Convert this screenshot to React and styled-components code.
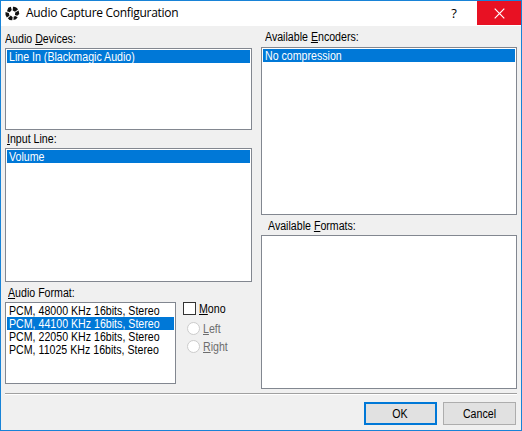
import React from "react";
import styled, { createGlobalStyle } from "styled-components";

const GlobalStyle = createGlobalStyle`
  * { box-sizing: border-box; }
  body { margin: 0; background: #f0f0f0; }
`;

const Window = styled.div`
  width: 522px;
  height: 431px;
  border: 1px solid #1883d7;
  background: #f0f0f0;
  color: #000;
  font: 12.5px/15px "Liberation Sans", Arial, sans-serif;
  white-space: nowrap;
  overflow: hidden;
  cursor: default;
`;

const TitleBar = styled.header`
  display: flex;
  height: 25px;
  padding-left: 4px;
  background: #fff;
`;

const AppIcon = styled.svg`
  width: 15px;
  height: 15px;
  margin-top: 5px;
`;

const Title = styled.h1`
  flex: 1;
  margin: 0 0 0 6px;
  font: 12px/24px "Open Sans", "Noto Sans", sans-serif;
  letter-spacing: -0.29px;
`;

const CaptionButton = styled.button`
  display: grid;
  place-items: center;
  width: ${(p) => (p.$close ? 44 : 46)}px;
  height: 24px;
  padding: 0;
  border: 0;
  background: ${(p) => (p.$close ? "#e81123" : "#fff")};
  color: ${(p) => (p.$close ? "#fff" : "#000")};
  font: 500 13px/24px "Open Sans", sans-serif;
`;

const Body = styled.main`
  display: flex;
  gap: 9px;
  height: 367px;
  padding: 0 4px;
`;

const Column = styled.section`
  width: ${(p) => p.$width}px;
`;

const Narrow = styled.span`
  display: inline-block;
  height: 15px;
  transform: scaleX(0.85);
  transform-origin: ${(p) => (p.$centered ? "center" : "left")} center;
  vertical-align: top;
  u {
    text-decoration-thickness: 1px;
    text-underline-offset: 1px;
    text-decoration-skip-ink: none;
  }
`;

const Label = styled.div`
  height: ${(p) => p.$height}px;
  padding: ${(p) => p.$top}px 0 0 ${(p) => p.$left}px;
`;

const ListBox = styled.ul`
  width: ${(p) => (p.$width ? `${p.$width}px` : "100%")};
  height: ${(p) => p.$height}px;
  margin: 0;
  padding: 1px;
  border: 1px solid #828790;
  background: #fff;
  list-style: none;
`;

const Item = styled.li`
  height: 13px;
  padding-left: 2px;
  background: ${(p) => (p.$selected ? "#0078d7" : "transparent")};
  color: ${(p) => (p.$selected ? "#fff" : "#000")};
`;

const FormatRow = styled.div`
  display: flex;
  gap: 7px;
`;

const Channels = styled.div`
  display: flex;
  flex-direction: column;
`;

const Option = styled.label`
  display: flex;
  align-items: flex-start;
  gap: 3px;
  height: ${(p) => (p.$disabled ? 18 : 13)}px;
  margin-left: ${(p) => (p.$disabled ? 4 : 0)}px;
  color: ${(p) => (p.$disabled ? "#6d6d6d" : "#000")};
`;

const RadioGroup = styled.div`
  padding-top: 7px;
`;

const CheckMark = styled.span`
  width: 13px;
  height: 13px;
  border: 1px solid #333;
  background: #fff;
`;

const RadioMark = styled.span`
  width: 13px;
  height: 13px;
  border: 1px solid #ccc;
  border-radius: 50%;
  background: #fff;
`;

const Divider = styled.div`
  height: 2px;
  margin: 0 4px;
  border-top: 1px solid #a0a0a0;
  border-bottom: 1px solid #fff;
`;

const Footer = styled.footer`
  display: flex;
  justify-content: flex-end;
  gap: 6px;
  padding: 7px 5px 0;
`;

const PushButton = styled.button`
  width: 73px;
  height: 23px;
  padding: 2px 0 0;
  border: ${(p) => (p.$primary ? "2px solid #0078d7" : "1px solid #adadad")};
  background: #e1e1e1;
  color: #000;
  font: inherit;
`;

function List({ items, selected, ...size }) {
  return (
    <ListBox {...size}>
      {items.map((text, i) => (
        <Item key={text} $selected={i === selected}>
          <Narrow>{text}</Narrow>
        </Item>
      ))}
    </ListBox>
  );
}

const FORMATS = [48000, 44100, 22050, 11025].map((r) => `PCM, ${r} KHz 16bits, Stereo`);

export default function App() {
  return (
    <>
      <GlobalStyle />
      <Window>
        <TitleBar>
          <AppIcon viewBox="0 0 15 15">
            <path d="M3.2 1.8 5.8.8 6.7 4 4.8 6.2 2 5.2ZM8 .8C10 .5 12 1.6 13 3.4L10 5.8 7.7 4.6ZM.5 6 3.8 7.1 4.5 9.8 1.8 11.5.5 9ZM10.2 6.6 13.6 4.5 14.3 8.1 12.2 9.8 10 9ZM2.8 12.2 5.8 9.6 7.7 11.2 7.2 14.2 4.5 13.9ZM8.6 10.8 10.2 9.9 12.7 11.2 11 13.2 8.5 14Z" fill="#111" />
          </AppIcon>
          <Title>Audio Capture Configuration</Title>
          <CaptionButton>?</CaptionButton>
          <CaptionButton $close aria-label="Close">
            <svg width="11" height="11" viewBox="0 0 11 11">
              <path d="M.7.7 10.3 10.3M10.3.7.7 10.3" stroke="#fff" strokeWidth="1.2" />
            </svg>
          </CaptionButton>
        </TitleBar>
        <Body>
          <Column $width={247}>
            <Label $height={22} $top={6} $left={0}>
              <Narrow>Audio <u>D</u>evices:</Narrow>
            </Label>
            <List $height={82} items={["Line In (Blackmagic Audio)"]} selected={0} />
            <Label $height={18} $top={2} $left={2}>
              <Narrow><u>I</u>nput Line:</Narrow>
            </Label>
            <List $height={134} items={["Volume"]} selected={0} />
            <Label $height={20} $top={4} $left={3}>
              <Narrow><u>A</u>udio Format:</Narrow>
            </Label>
            <FormatRow>
              <List $width={171} $height={82} items={FORMATS} selected={1} />
              <Channels>
                <Option>
                  <CheckMark />
                  <Narrow><u>M</u>ono</Narrow>
                </Option>
                <RadioGroup>
                  <Option $disabled><RadioMark /><Narrow><u>L</u>eft</Narrow></Option>
                  <Option $disabled><RadioMark /><Narrow><u>R</u>ight</Narrow></Option>
                </RadioGroup>
              </Channels>
            </FormatRow>
          </Column>
          <Column $width={256}>
            <Label $height={21} $top={4} $left={4}>
              <Narrow>Available <u>E</u>ncoders:</Narrow>
            </Label>
            <List $height={168} items={["No compression"]} selected={0} />
            <Label $height={20} $top={4} $left={7}>
              <Narrow>Available <u>F</u>ormats:</Narrow>
            </Label>
            <List $height={154} items={[]} />
          </Column>
        </Body>
        <Divider />
        <Footer>
          <PushButton $primary><Narrow $centered>OK</Narrow></PushButton>
          <PushButton><Narrow $centered>Cancel</Narrow></PushButton>
        </Footer>
      </Window>
    </>
  );
}
